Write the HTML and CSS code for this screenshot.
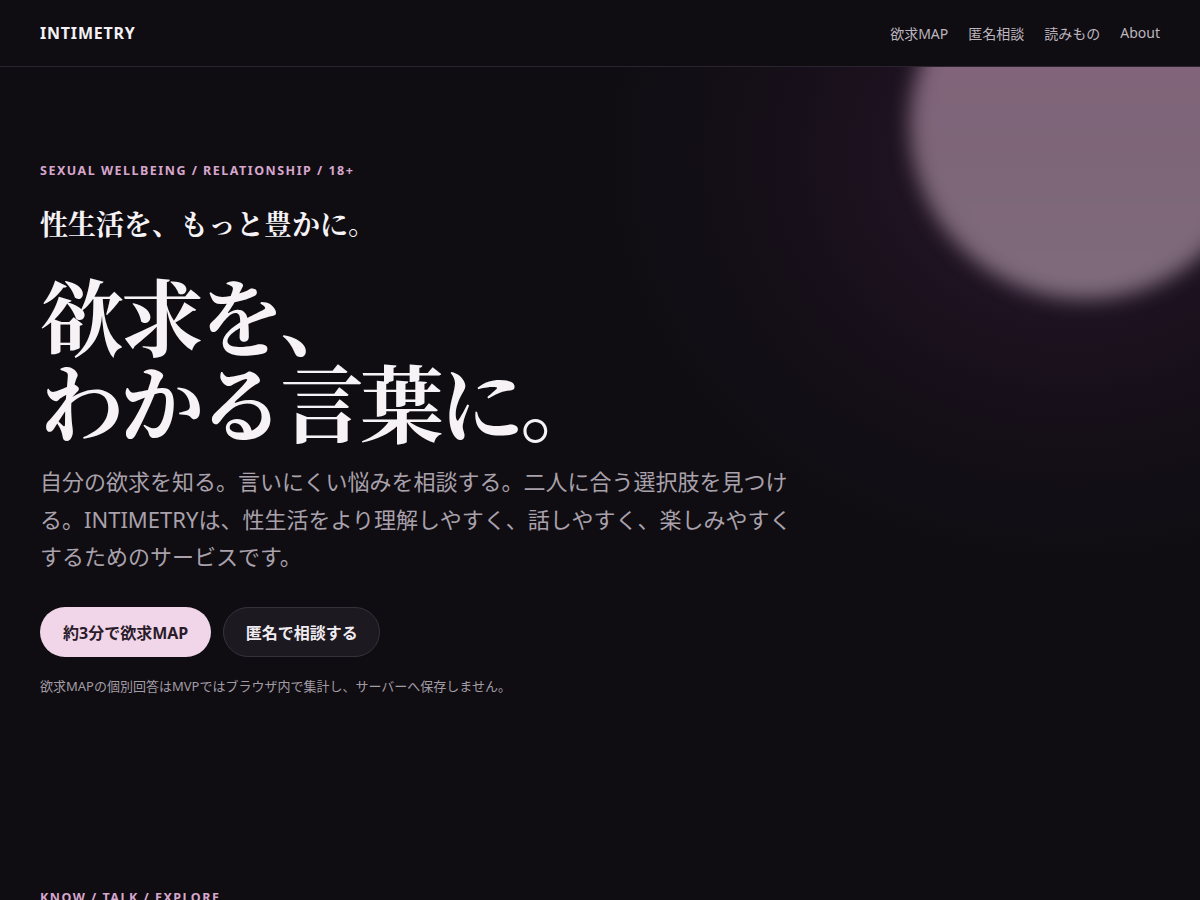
FILE: index.html
```html
<!DOCTYPE html>
<html lang="ja">
<head>
<meta charset="utf-8">
<title>INTIMETRY</title>
<link rel="stylesheet" href="styles.css">
</head>
<body>
<header class="site-header">
  <a class="logo" href="#">INTIMETRY</a>
  <nav class="nav">
    <a href="#">欲求MAP</a>
    <a href="#">匿名相談</a>
    <a href="#">読みもの</a>
    <a href="#">About</a>
  </nav>
</header>
<main>
  <section class="hero">
    <div class="glow"></div>
    <div class="blob"></div>
    <div class="hero-inner">
      <p class="eyebrow">SEXUAL WELLBEING / RELATIONSHIP / 18+</p>
      <p class="tagline">性生活を、もっと豊かに。</p>
      <h1 class="title">欲求を、<br>わかる言葉に。</h1>
      <p class="lead">自分の欲求を知る。言いにくい悩みを相談する。二人に合う選択肢を見つける。INTIMETRYは、性生活をより理解しやすく、話しやすく、楽しみやすくするためのサービスです。</p>
      <div class="actions">
        <a class="btn btn-primary" href="#">約3分で欲求MAP</a>
        <a class="btn btn-ghost" href="#">匿名で相談する</a>
      </div>
      <p class="note">欲求MAPの個別回答はMVPではブラウザ内で集計し、サーバーへ保存しません。</p>
    </div>
  </section>
  <section class="section">
    <p class="eyebrow">KNOW / TALK / EXPLORE</p>
  </section>
</main>
</body>
</html>
```
FILE: styles.css
```css
* { box-sizing: border-box; }
html, body { margin: 0; padding: 0; }
body {
  background: #0f0d12;
  color: #f2eef2;
  font-family: "Noto Sans", "Noto Sans CJK JP", sans-serif;
  overflow: hidden;
}
a { text-decoration: none; color: inherit; }
.site-header {
  position: relative;
  z-index: 5;
  height: 67px;
  display: flex;
  align-items: center;
  justify-content: space-between;
  padding: 0 40px;
  background: #0f0d12;
  border-bottom: 1px solid #2a2430;
}
.logo {
  font-family: "Noto Sans", sans-serif;
  font-weight: 700;
  font-size: 16px;
  letter-spacing: 0.8px;
  color: #f4f0f4;
}
.nav {
  display: flex;
  gap: 20px;
  font-size: 14px;
  color: #bdb5bf;
}
.hero {
  position: relative;
  height: 822px;
  overflow: hidden;
}
.glow {
  position: absolute;
  left: 600px;
  top: -320px;
  width: 940px;
  height: 820px;
  border-radius: 50%;
  background: radial-gradient(closest-side, rgba(72, 36, 72, 0.5), rgba(42, 22, 46, 0.28) 60%, rgba(15, 13, 18, 0) 100%);
}
.blob {
  position: absolute;
  left: 910px;
  top: -118px;
  width: 350px;
  height: 350px;
  border-radius: 50%;
  background: linear-gradient(180deg, #86617b 0%, #7d6678 60%, #7e6b7c 100%);
  filter: blur(10px);
}
.hero-inner {
  position: relative;
  padding: 95px 40px 0;
}
.eyebrow {
  margin: 0;
  font-family: "Noto Sans", sans-serif;
  font-size: 12.5px;
  font-weight: 700;
  letter-spacing: 1.5px;
  color: #d7a6cd;
}
.tagline {
  margin: 26px 0 0;
  font-family: "Noto Serif CJK JP", "Noto Sans CJK JP", serif;
  font-size: 28px;
  font-weight: 700;
  line-height: 1.3;
  color: #f6f2f6;
}
.title {
  margin: 30px 0 0;
  font-family: "Noto Serif CJK JP", "Noto Sans CJK JP", serif;
  font-size: 84px;
  font-weight: 700;
  line-height: 86px;
  letter-spacing: -4px;
  color: #f6f2f6;
}
.lead {
  margin: 20px 0 0;
  max-width: 754px;
  font-size: 22px;
  line-height: 1.7;
  color: #a9a1ab;
}
.actions {
  margin-top: 31px;
  display: flex;
  gap: 12px;
}
.btn {
  display: inline-flex;
  align-items: center;
  justify-content: center;
  height: 50px;
  border-radius: 25px;
  font-size: 16px;
  font-weight: 700;
}
.btn-primary {
  padding: 0 23px;
  background: #f1d5e8;
  color: #2a1c2a;
}
.btn-ghost {
  padding: 0 21.5px;
  background: #1d1920;
  border: 1px solid #37313c;
  color: #f1ecf1;
}
.note {
  margin: 19px 0 0;
  font-size: 13px;
  color: #a39ca5;
}
.section {
  padding: 0 40px;
}
```
